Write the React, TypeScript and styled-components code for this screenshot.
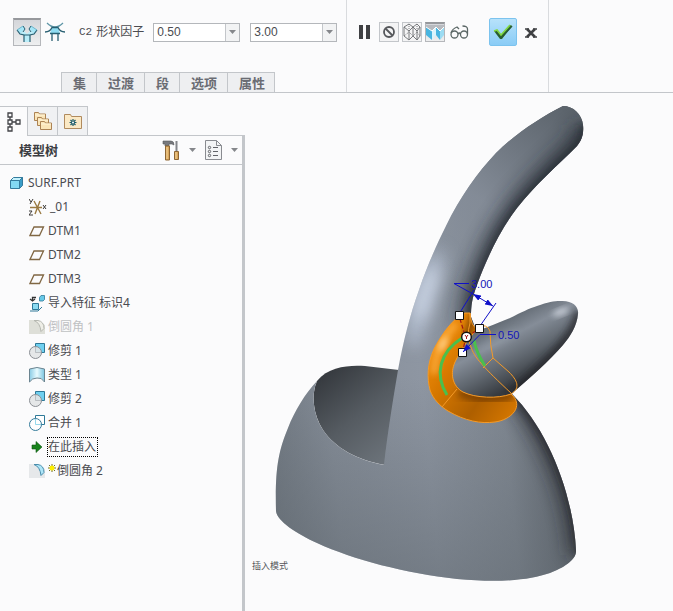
import React, { useState } from 'react';
import styled, { createGlobalStyle, css } from 'styled-components';

const line = '#c3c6ca';
const ink = '#4a4b50';

const GlobalStyle = createGlobalStyle`
  * { box-sizing: border-box; }
  body {
    margin: 0;
    background: #fbfbfc;
    color: ${ink};
    font: 12px/16px "Noto Sans", "Noto Sans CJK SC", sans-serif;
  }
  button, input { font: inherit; color: inherit; }
  svg { display: block; }
`;

const Page = styled.div`
  display: flex;
  flex-direction: column;
  min-height: 100vh;
`;

const Ribbon = styled.header`
  display: flex;
  border-bottom: 1px solid ${line};
`;

const Dashboard = styled.section`
  display: flex;
  flex-direction: column;
  padding: 18px 9px 0 13px;
`;

const ToolRow = styled.div<{ $gap?: number }>`
  display: flex;
  align-items: center;
  height: 28px;
  gap: ${(p) => p.$gap ?? 3}px;
`;

const IconButton = styled.button<{ $w: number; $h?: number; $look?: 'plain' | 'pressed' | 'boxed' | 'accept' }>`
  display: flex;
  align-items: center;
  justify-content: center;
  flex: none;
  width: ${(p) => p.$w}px;
  height: ${(p) => p.$h ?? p.$w}px;
  padding: 0;
  border: 0;
  background: none;
  ${(p) =>
    p.$look === 'boxed' &&
    css`
      border: 1px solid ${line};
      background: #f4f4f5;
    `}
  ${(p) =>
    p.$look === 'pressed' &&
    css`
      border: 1px solid #b5b7bb;
      border-top: 2px solid #96989c;
      background: linear-gradient(#d4d6da, #eeeff0);
    `}
  ${(p) =>
    p.$look === 'accept' &&
    css`
      border: 1px solid #7cc3ee;
      border-radius: 2px;
      background: linear-gradient(#b7e2fb, #8accf6);
    `}
`;

const FactorLabel = styled.label`
  display: flex;
  align-items: center;
  gap: 4px;
  margin: 0 6px 0 10px;
`;

const Code = styled.span`
  font: 11px/16px "Liberation Mono", monospace;
`;

const Combo = styled.div`
  display: flex;
  width: 87px;
  height: 19px;
  border: 1px solid #b4b7bb;
  background: #fff;
`;

const ComboInput = styled.input`
  flex: 1;
  min-width: 0;
  padding: 0 3px;
  border: 0;
  background: none;
  font: 12px/16px "Liberation Sans", sans-serif;
  outline: none;
`;

const ComboButton = styled.button`
  display: flex;
  align-items: center;
  justify-content: center;
  width: 14px;
  padding: 0;
  border: 0;
  border-left: 1px solid ${line};
  background: #f2f3f4;
`;

const Combos = styled.div`
  display: flex;
  gap: 10px;
`;

const RibbonTabs = styled.nav`
  display: flex;
  margin: 26px 0 0 48px;
`;

const RibbonTab = styled.button`
  height: 20px;
  padding: 0 10px 0 11px;
  border: 1px solid ${line};
  border-width: 1px 0 0 1px;
  background: #eeeff1;
  color: #6a6c73;
  font-size: 13px;
  font-weight: 700;
  line-height: 18px;
  &:last-child { padding-right: 9px; border-right-width: 1px; }
`;

const Controls = styled.section`
  padding: 18px 11px 0;
  border: 1px solid #d9dbde;
  border-width: 0 1px;
`;

const Group = styled.div<{ $gap: number }>`
  display: flex;
  align-items: center;
  gap: ${(p) => p.$gap}px;
`;

const Workspace = styled.main`
  display: flex;
  flex: 1;
`;

const Navigator = styled.aside`
  display: flex;
  flex-direction: column;
  flex: none;
  width: 245px;
  padding-top: 13px;
`;

const PanelTabs = styled.div`
  display: flex;
  height: 30px;
`;

const PanelTab = styled.button<{ $active?: boolean }>`
  display: flex;
  align-items: center;
  justify-content: center;
  width: ${(p) => (p.$active ? 27 : 30)}px;
  padding: 0;
  border: 0 solid ${line};
  border-width: ${(p) => (p.$active ? '1px 0 0' : '1px 0 1px 1px')};
  background: ${(p) => (p.$active ? '#fbfbfc' : '#f0f1f3')};
`;

const TabFiller = styled.div`
  flex: 1;
  border: 0 solid ${line};
  border-width: 0 0 1px 1px;
`;

const PanelBody = styled.div`
  flex: 1;
  border-right: 3px solid ${line};
`;

const PanelHeader = styled.div`
  display: flex;
  align-items: center;
  height: 29px;
  padding: 0 4px 0 19px;
  border-bottom: 1px solid ${line};
`;

const Title = styled.h2`
  flex: 1;
  margin: 0;
  color: #3c3d42;
  font-size: 13px;
  line-height: 16px;
`;

const Tree = styled.ul`
  margin: 0;
  padding: 6px 0 0;
  list-style: none;
`;

const TreeRow = styled.li<{ $root?: boolean; $muted?: boolean }>`
  display: flex;
  align-items: center;
  gap: 3px;
  height: 24px;
  padding-left: ${(p) => (p.$root ? 9 : 29)}px;
  color: ${(p) => (p.$muted ? '#bfc1c3' : ink)};
  & > svg { flex: none; }
`;

const TreeLabel = styled.span<{ $focus?: boolean }>`
  display: flex;
  align-items: center;
  gap: 1px;
  line-height: 18px;
  outline: ${(p) => (p.$focus ? '1px dotted #000' : 'none')};
  padding-right: 1px;
  white-space: pre;
`;

const Viewport = styled.section`
  flex: 1;
  min-width: 0;
  & > svg { width: 100%; height: auto; }
`;

const Caret = () => (
  <svg width="7" height="4">
    <path d="M0 0h7L3.5 4z" fill="#85878b" />
  </svg>
);

const ConicIcon = () => (
  <svg width="22" height="20" viewBox="0 0 22 20">
    <path d="M1 7l6-4 2 3-5 5zM21 7l-6-4-2 3 5 5z" fill="#a5e6f7" />
    <path d="M4 11l4-3 3 3 3-3 4 3-4 1v7H8v-7z" fill="#b9edf9" />
    <path d="M1 7l3 4 4 1v7M21 7l-3 4-4 1v7M8 12h6" fill="none" stroke="#285f72" strokeWidth="1.2" />
    <path d="M7 3l2 3-2 3M15 3l-2 3 2 3" fill="none" stroke="#285f72" />
    <path d="M1 7l6-4M21 7l-6-4" fill="none" stroke="#6fb5cb" />
  </svg>
);

const RoundIcon = () => (
  <svg width="22" height="20" viewBox="0 0 22 20">
    <path d="M8 5.500h6l2 6H6z" fill="#8fdcf2" />
    <path d="M3 1Q11 9 19 1" fill="none" stroke="#5d95a6" strokeWidth="1.3" />
    <path d="M1 10Q6 10 8 5.500h6Q16 10 21 10M6 11.500h10M8 11.500V19M14 11.500V19" fill="none" stroke="#285f72" strokeWidth="1.3" />
  </svg>
);

const PauseIcon = () => (
  <svg width="12" height="14"><path d="M0 0h4v14H0zM7 0h4v14H7z" fill="#3f4043" /></svg>
);

const NoPreviewIcon = () => (
  <svg width="14" height="14" fill="none" stroke="#55575b" strokeWidth="1.8">
    <circle cx="7" cy="7" r="5" /><path d="M3.5 3.5l7 7" />
  </svg>
);

const WireIcon = () => (
  <svg width="18" height="18" fill="none" stroke="#6c6e72" strokeWidth=".9">
    <path d="M1 4l5 4v9l-5-4zM6 8l4-4v9l-4 4M10 4l4 4v9l-4-4M14 8l3-4v9l-3 4M1 4l5-3 4 3 4-3 3 3" />
    <path d="M1 13l5-4 4 4 4-4 3 4M6 1v8M14 1v8" strokeDasharray="1 1" />
  </svg>
);

const ShadedIcon = () => (
  <svg width="18" height="17">
    <path d="M0 1h18v3l-4 4-4-4-4 4-6-4z" fill="#b7babf" />
    <path d="M0 3l6 4v9l-6-5z" fill="#48b5e0" /><path d="M6 7l4-4v8l-4 5z" fill="#d8f4fd" />
    <path d="M10 3l4 4v9l-4-5z" fill="#48b5e0" /><path d="M14 7l4-4v8l-4 5z" fill="#9cdcf3" />
    <path d="M0 3l6 4 4-4 4 4 4-4" fill="none" stroke="#fff" />
  </svg>
);

const GlassesIcon = () => (
  <svg width="20" height="15" fill="none" stroke="#5b6766" strokeWidth="1.3">
    <circle cx="4.5" cy="9.500" r="3.500" /><circle cx="14" cy="9.500" r="3.500" />
    <path d="M8 9q1.500-2 2.500 0M1 8q1-4 6-6l2 2M17.500 9V4q0-3-5-3" />
  </svg>
);

const CheckIcon = () => (
  <svg width="22" height="18" viewBox="0 0 22 18">
    <path d="M2 8l3-1 4 5L18 2l2 1-10 13H8z" fill="#39722e" />
    <path d="M2 8l3-1 4 5L18 2" fill="none" stroke="#80d842" strokeWidth="1.6" />
    <path d="M4 9l5 6L20 3" fill="none" stroke="#275b36" strokeWidth="1.5" />
  </svg>
);

const CrossIcon = () => (
  <svg width="12" height="13"><path d="M2 3l8 8M10 3l-8 8" stroke="#3f4043" strokeWidth="2.6" /><path d="M0 3h4M8 3h4M0 11h4M8 11h4" stroke="#3f4043" strokeWidth="1.4" /></svg>
);

const TreeTabIcon = () => (
  <svg width="14" height="20" fill="none" stroke="#424347" strokeWidth="1.3">
    <path d="M1 1h4v4H1zM1 8h4v4H1zM1 15h4v4H1zM9 8h4v4H9zM3 5v3M3 12v3M5 10h4" />
  </svg>
);

const folder = (x: number, y: number) => (
  <g key={x} transform={`translate(${x} ${y})`}>
    <path d="M.5 9.500V1.500h4l1 1.500h6v6.500z" fill="#fae5b9" stroke="#ac8354" />
    <path d="M1 4h10" stroke="#fff5d9" />
  </g>
);

const FoldersIcon = () => (
  <svg width="20" height="20">{folder(1, 0)}{folder(4, 5)}{folder(7, 9)}</svg>
);

const FavoritesIcon = () => (
  <svg width="18" height="17">
    <path d="M.5 15.500V1.500h6l1 2h10v12z" fill="#fbe9c5" stroke="#b08a5d" />
    <path d="M9 6v7M5.500 9.500h7M6.500 7l5 5M11.500 7l-5 5" stroke="#1d5c69" strokeWidth="1.2" />
    <circle cx="9" cy="9.500" r="1" fill="#fff" />
  </svg>
);

const ToolsIcon = () => (
  <svg width="18" height="21">
    <path d="M1 1h8q3 0 3 4l-2-1H7v2H3V4H1z" fill="#77797e" stroke="#55575b" strokeWidth=".6" />
    <path d="M3.500 6h4v14h-4z" fill="#d9a65c" stroke="#8e6633" /><path d="M5 7v12" stroke="#f5d59a" />
    <path d="M14.500 1v11" stroke="#83858a" strokeWidth="2" />
    <path d="M12.500 11.500h4v8h-4z" fill="#d9a65c" stroke="#8e6633" /><path d="M14 12v7" stroke="#f5d59a" />
  </svg>
);

const ListIcon = () => (
  <svg width="17" height="20" fill="none">
    <path d="M.5.5h11l5 5v14H.5z" fill="#f3f4f5" stroke="#898b90" /><path d="M11.500.5v5h5" stroke="#898b90" />
    <g stroke="#606267"><circle cx="4.500" cy="7.500" r="1.200" /><circle cx="4.500" cy="11.500" r="1.200" /><circle cx="4.500" cy="15.500" r="1.200" /><path d="M8 7.500h5M8 11.500h5M8 15.500h5" /></g>
  </svg>
);

const PartIcon = () => (
  <svg width="16" height="16" stroke="#347b9d" strokeLinejoin="round">
    <path d="M1.500 5.500l3-3h9l-3 3z" fill="#c3f1fc" /><path d="M10.500 5.500l3-3v8l-3 3z" fill="#3a9dc8" /><path d="M1.500 5.500h9v8h-9z" fill="#83d9f3" />
  </svg>
);

const CsysIcon = () => (
  <svg width="18" height="18" fill="none">
    <path d="M1 9.500h12M5 3l7 13M11 3L6 16" stroke="#9a7a42" strokeWidth="1.400" />
    <path d="M0 1l2 3M4 1L1 6M0 13h3l-3 4h4M14 7l3 4M17 7l-3 4" stroke="#3d3a38" />
  </svg>
);

const PlaneIcon = () => (
  <svg width="16" height="16"><path d="M5 4h9.500l-4 8.500H1z" fill="none" stroke="#806743" strokeWidth="1.300" /></svg>
);

const ImportIcon = () => (
  <svg width="16" height="17">
    <path d="M7 2.500H3.500V6M1 4l2.500 2L6 4" fill="none" stroke="#333" strokeWidth="1.300" />
    <path d="M10.500 2.500l1.500-2h3.500v4l-1.500 1.500h-3.500z" fill="#68c9e8" stroke="#2e7998" strokeWidth=".8" />
    <path d="M3.500 8.500h6v6h-6z" fill="#8bdbf2" stroke="#2e7998" />
    <path d="M1 16h8l4-4" fill="none" stroke="#2e7998" />
  </svg>
);

const FilletIcon = ({ muted = false }: { muted?: boolean }) => (
  <svg width="16" height="16">
    <path d="M0 1h7l9 5v9H0z" fill={muted ? '#dedfd8' : '#e6e8ea'} />
    <path d="M5 1.500q6 2 7 11l3-3q0-7-6-8z" fill={muted ? '#eeeee7' : '#aee6f8'} stroke={muted ? '#b5b7b0' : '#4a8dac'} />
  </svg>
);

const TrimIcon = ({ merge = false }: { merge?: boolean }) => (
  <svg width="16" height="16">
    <path d="M6.500.5h9v9h-9z" fill={merge ? '#fff' : '#6fd0f0'} stroke="#2e7998" />
    <circle cx="6.500" cy="9.500" r="6" fill={merge ? '#fff' : '#e2e4e6'} fillOpacity=".9" stroke={merge ? '#347a9a' : '#8b8f94'} />
    <path d="M6.500 4v5.500H12" fill="none" stroke={merge ? '#95d9ec' : '#b9bdc1'} />
  </svg>
);

const StyleIcon = () => (
  <svg width="16" height="16">
    <defs><linearGradient id="sheet"><stop stopColor="#8acce5" /><stop offset=".5" stopColor="#e8fbff" /><stop offset="1" stopColor="#7bc4df" /></linearGradient></defs>
    <path d="M.5 2q7.500-3 15 0v13q-3-5-7.500-4Q3 11 .5 15z" fill="url(#sheet)" stroke="#6b8490" />
  </svg>
);

const InsertIcon = () => (
  <svg width="16" height="16"><path d="M3 6h4V2.500L13 8l-6 5.500V10H3z" fill="#17821b" stroke="#0d5213" strokeWidth=".6" /></svg>
);

const SparkIcon = () => (
  <svg width="8" height="18"><path d="M4 2v8M0 6h8M1 3l6 6M7 3L1 9" stroke="#5d5a12" strokeWidth=".9" /><circle cx="4" cy="6" r="2.500" fill="#fff000" /></svg>
);

type TreeNode = { icon: React.ReactNode; label: string; root?: boolean; muted?: boolean; focus?: boolean; spark?: boolean };

const nodes: TreeNode[] = [
  { icon: <PartIcon />, label: 'SURF.PRT', root: true },
  { icon: <CsysIcon />, label: '_01' },
  { icon: <PlaneIcon />, label: 'DTM1' },
  { icon: <PlaneIcon />, label: 'DTM2' },
  { icon: <PlaneIcon />, label: 'DTM3' },
  { icon: <ImportIcon />, label: '导入特征 标识4' },
  { icon: <FilletIcon muted />, label: '倒圆角 1', muted: true },
  { icon: <TrimIcon />, label: '修剪 1' },
  { icon: <StyleIcon />, label: '类型 1' },
  { icon: <TrimIcon />, label: '修剪 2' },
  { icon: <TrimIcon merge />, label: '合并 1' },
  { icon: <InsertIcon />, label: '在此插入', focus: true },
  { icon: <FilletIcon />, label: '倒圆角 2', spark: true },
];

const BODY =
  'M276 511C275 470 278 452 288 428C295 410 305 394 317 381C311 394 313 415 323 430C335 448 357 460 384 465C388 430 393 400 398 370C403 342 410 315 419 290C427 266 437 244 446 226C460 197 478 172 496 153C515 134 541 117 563 106C573 106 582 114 583 125C584 135 581 141 577 146C557 166 536 184 517 208C500 230 486 260 477 285C472 298 471 306 471 317L475 327L500 370L512 394C548 430 573 493 576 550C577 560 563 568 550 573C530 580 500 583 457 579C405 573 354 560 317 543C297 534 277 521 276 511Z';
const HORN_EDGE = 'M583 125C584 135 581 141 577 146C557 166 536 184 517 208C500 230 486 260 477 285C472 298 471 306 471 330';
const BRANCH =
  'M470 334C480 330 495 324 510 318C520 313 530 308 537 306C548 302 554 301 560 301C572 300 579 306 578 314C577 326 570 337 563 345C550 360 530 378 511 394C495 399 475 398 463 392C452 386 450 373 455 362C460 351 464 345 470 334Z';
const RING =
  'M465 313C454 317 441 335 434 349C427 364 427 378 430 390C433 399 440 406 448 411C465 421 481 424 495 422C511 420 525 406 511 394C498 399 475 398 463 392C452 386 450 373 455 362C461 350 466 342 477 329Q471 326 470 313Z';

const Model = () => (
  <svg viewBox="245 93 428 518" role="img" aria-label="SURF.PRT">
    <defs>
      <linearGradient id="body" gradientUnits="userSpaceOnUse" x1="270" y1="450" x2="584" y2="420">
        <stop stopColor="#727a83" /><stop offset=".2" stopColor="#868e99" /><stop offset=".5" stopColor="#8e96a2" /><stop offset=".75" stopColor="#7f8791" /><stop offset="1" stopColor="#50565d" />
      </linearGradient>
      <linearGradient id="fall" gradientUnits="userSpaceOnUse" x1="430" y1="380" x2="400" y2="585">
        <stop stopColor="#5d656c" stopOpacity="0" /><stop offset="1" stopColor="#5d656c" stopOpacity=".55" />
      </linearGradient>
      <linearGradient id="horn" gradientUnits="userSpaceOnUse" x1="560" y1="100" x2="450" y2="280">
        <stop stopColor="#5b636b" /><stop offset=".6" stopColor="#848c98" stopOpacity=".8" /><stop offset="1" stopColor="#8c94a0" stopOpacity="0" />
      </linearGradient>
      <linearGradient id="bowl" gradientUnits="userSpaceOnUse" x1="325" y1="375" x2="390" y2="455">
        <stop stopColor="#373b40" /><stop offset=".5" stopColor="#555b61" /><stop offset="1" stopColor="#6b7279" />
      </linearGradient>
      <linearGradient id="branch" gradientUnits="userSpaceOnUse" x1="500" y1="320" x2="530" y2="378">
        <stop stopColor="#626a73" /><stop offset=".3" stopColor="#858d98" /><stop offset=".65" stopColor="#5f666e" /><stop offset="1" stopColor="#363a3f" />
      </linearGradient>
      <linearGradient id="ring" gradientUnits="userSpaceOnUse" x1="430" y1="350" x2="518" y2="410">
        <stop stopColor="#ef8c0c" /><stop offset=".25" stopColor="#d87900" /><stop offset=".65" stopColor="#ae5f00" /><stop offset="1" stopColor="#d57700" />
      </linearGradient>
      <filter id="b3" x="-50%" y="-50%" width="200%" height="200%"><feGaussianBlur stdDeviation="3" /></filter>
      <filter id="b9" filterUnits="userSpaceOnUse" x="245" y="93" width="428" height="518"><feGaussianBlur stdDeviation="9" /></filter>
      <clipPath id="bodyClip"><path d={BODY} /></clipPath>
      <clipPath id="branchClip"><path d={BRANCH} /></clipPath>
      <clipPath id="ringClip"><path d={RING} /></clipPath>
      <marker id="arrow" viewBox="0 0 8 6" refX="8" refY="3" markerWidth="8" markerHeight="6" markerUnits="userSpaceOnUse" orient="auto-start-reverse"><path d="M0 0l8 3-8 3z" fill="#1010c8" /></marker>
    </defs>

    <path d="M317 381C329 366 350 365 365 366L399 370L385 465C357 460 335 448 323 430C313 415 311 394 317 381Z" fill="url(#bowl)" />
    <path d={BODY} fill="url(#body)" />
    <g clipPath="url(#bodyClip)">
      <path d="M270 360h320v230H270z" fill="url(#fall)" />
      <path d="M400 100h190v200H400z" fill="url(#horn)" />
      <path d={HORN_EDGE} fill="none" stroke="#24282e" strokeWidth="22" opacity=".75" filter="url(#b9)" />
      <path d={HORN_EDGE} fill="none" stroke="#24282e" strokeWidth="6" opacity=".65" filter="url(#b3)" />
      <path d="M506 380C548 430 577 493 580 555" fill="none" stroke="#202428" strokeWidth="20" opacity=".7" filter="url(#b9)" />
      <path d="M510 390C549 430 577 493 580 555" fill="none" stroke="#202428" strokeWidth="7" opacity=".65" filter="url(#b3)" />
      <path d="M437 258Q420 300 414 338" fill="none" stroke="#cfdcf2" strokeWidth="15" strokeLinecap="round" opacity=".6" filter="url(#b9)" />
      <path d="M433 274Q425 292 420 314" fill="none" stroke="#e4eeff" strokeWidth="13" strokeLinecap="round" opacity=".75" filter="url(#b9)" />
    </g>

    <path d={BRANCH} fill="url(#branch)" />
    <g clipPath="url(#branchClip)">
      <path d="M580 312C578 325 569 338 563 345C552 359 530 379 511 396" fill="none" stroke="#202327" strokeWidth="12" opacity=".65" filter="url(#b3)" />
      <ellipse cx="561" cy="312" rx="9" ry="3" transform="rotate(-22 561 312)" fill="#edf2fa" opacity=".75" filter="url(#b3)" />
      <ellipse cx="497" cy="341" rx="25" ry="5" transform="rotate(-25 497 341)" fill="#a4adb9" opacity=".25" filter="url(#b3)" />
    </g>

    <path d={RING} fill="url(#ring)" />
    <g clipPath="url(#ringClip)">
      <path d="M456 324C443 337 435 353 434 374" fill="none" stroke="#ffb347" strokeWidth="7" opacity=".75" filter="url(#b3)" />
      <ellipse cx="443" cy="344" rx="3" ry="8" transform="rotate(28 443 344)" fill="#ffd691" filter="url(#b3)" />
      <path d="M459 392Q480 402 512 396" fill="none" stroke="#673500" strokeWidth="9" opacity=".65" filter="url(#b3)" />
      <path d="M473 314q-1 14-8 24" fill="none" stroke="#693800" strokeWidth="7" opacity=".8" filter="url(#b3)" />
    </g>
    <g fill="none" stroke="#f49a28" strokeWidth="1">
      <path d={RING} />
      <path d="M470 313V323Q466 336 471 347C474 357 483 367 512 394M477 327Q487 323 490 331Q490 345 493 358L509 372C517 380 521 388 511 394M483 368L493 358M442 407L457 389" />
    </g>
    <path d="M462 338C440 352 434 374 447 395M474 340Q476 352 485 366" fill="none" stroke="#4ac04d" strokeWidth="3" />

    <g fill="none" stroke="#1010c8" strokeWidth="1">
      <path d="M469 283.500H454L473 294M459 314L474 290M480 326L496 303" />
      <path d="M473 294L493 306" markerStart="url(#arrow)" markerEnd="url(#arrow)" />
    </g>
    <path d="M460 319L464 332M476 331L466 337L463 350" fill="none" stroke="#a11616" strokeWidth="1.200" strokeDasharray="4 2" />
    <g fill="#fff" stroke="#111" strokeWidth="1">
      <path d="M455.500 311.500h8v8h-8zM475.500 324.500h8v8h-8zM458.500 348.500h8v8h-8z" />
      <circle cx="466.500" cy="337" r="4.800" strokeWidth="1.400" />
    </g>
    <path d="M496 334.500H480L463 352" markerEnd="url(#arrow)" stroke="#1010c8" fill="none" />
    <path d="M465 335l1.500 2 1.500-2M466.500 337v2" stroke="#a11616" fill="none" />
    <g fill="#1414b8" fontFamily='"Liberation Sans", sans-serif' fontSize="11">
      <text x="471" y="288">3.00</text>
      <text x="498" y="339">0.50</text>
    </g>
    <text x="252" y="569" fill="#55575b" fontFamily='"Noto Sans CJK SC", sans-serif' fontSize="9">插入模式</text>
  </svg>
);

const FactorCombo = ({ id, start, label }: { id: string; start: string; label?: string }) => {
  const [value, setValue] = useState(start);
  return (
    <Combo>
      <ComboInput id={id} aria-label={label} value={value} onChange={(e) => setValue(e.target.value)} />
      <ComboButton aria-label="展开"><Caret /></ComboButton>
    </Combo>
  );
};

export default function App() {
  return (
    <Page>
      <GlobalStyle />
      <Ribbon>
        <Dashboard>
          <ToolRow>
            <IconButton $w={28} $look="pressed" aria-label="圆锥"><ConicIcon /></IconButton>
            <IconButton $w={22} aria-label="圆形"><RoundIcon /></IconButton>
            <FactorLabel htmlFor="factor"><Code>C2</Code>形状因子</FactorLabel>
            <Combos>
              <FactorCombo id="factor" start="0.50" />
              <FactorCombo id="radius" start="3.00" label="半径" />
            </Combos>
          </ToolRow>
          <RibbonTabs>
            {['集', '过渡', '段', '选项', '属性'].map((t) => <RibbonTab key={t}>{t}</RibbonTab>)}
          </RibbonTabs>
        </Dashboard>
        <Controls>
          <ToolRow $gap={17}>
            <Group $gap={8}>
              <IconButton $w={13} $h={20} aria-label="暂停"><PauseIcon /></IconButton>
              <Group $gap={3}>
                <IconButton $w={20} $look="boxed" aria-label="无预览"><NoPreviewIcon /></IconButton>
                <IconButton $w={20} $look="boxed" aria-label="分离"><WireIcon /></IconButton>
                <IconButton $w={20} $look="pressed" aria-label="连接"><ShadedIcon /></IconButton>
                <IconButton $w={24} $h={20} aria-label="校验"><GlassesIcon /></IconButton>
              </Group>
            </Group>
            <Group $gap={8}>
              <IconButton $w={28} $look="accept" aria-label="确定"><CheckIcon /></IconButton>
              <IconButton $w={12} $h={20} aria-label="取消"><CrossIcon /></IconButton>
            </Group>
          </ToolRow>
        </Controls>
      </Ribbon>
      <Workspace>
        <Navigator>
          <PanelTabs>
            <PanelTab $active aria-label="模型树"><TreeTabIcon /></PanelTab>
            <PanelTab aria-label="文件夹浏览器"><FoldersIcon /></PanelTab>
            <PanelTab aria-label="收藏夹"><FavoritesIcon /></PanelTab>
            <TabFiller />
          </PanelTabs>
          <PanelBody>
            <PanelHeader>
              <Title>模型树</Title>
              <Group $gap={8}>
                <IconButton $w={18} $h={21} aria-label="设置"><ToolsIcon /></IconButton>
                <IconButton $w={8} aria-label="设置菜单"><Caret /></IconButton>
                <IconButton $w={18} $h={20} aria-label="显示"><ListIcon /></IconButton>
                <IconButton $w={8} aria-label="显示菜单"><Caret /></IconButton>
              </Group>
            </PanelHeader>
            <Tree>
              {nodes.map((n) => (
                <TreeRow key={n.label} $root={n.root} $muted={n.muted}>
                  {n.icon}
                  <TreeLabel $focus={n.focus}>{n.spark && <SparkIcon />}{n.label}</TreeLabel>
                </TreeRow>
              ))}
            </Tree>
          </PanelBody>
        </Navigator>
        <Viewport><Model /></Viewport>
      </Workspace>
    </Page>
  );
}
